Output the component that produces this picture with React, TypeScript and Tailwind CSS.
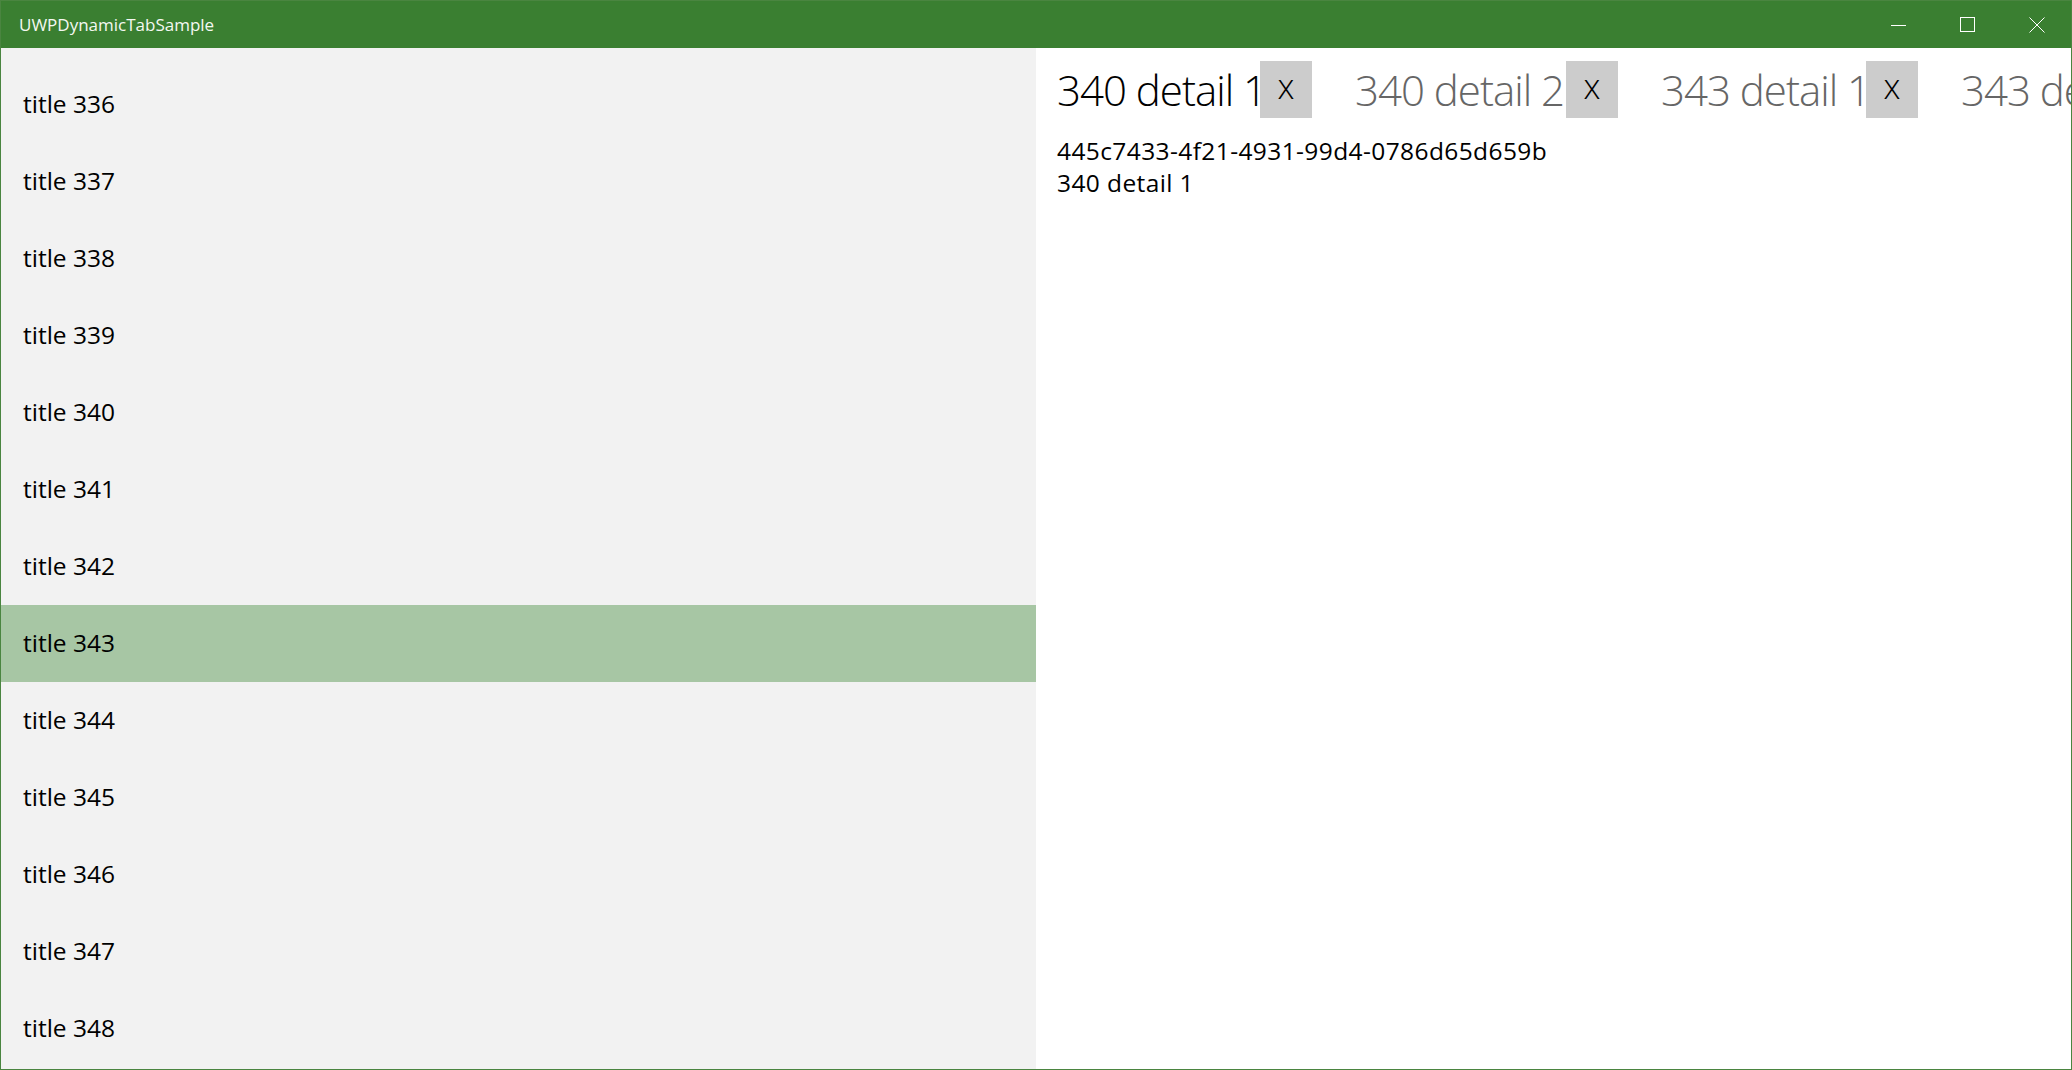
const FONT = "font-['Segoe_UI','Open_Sans',sans-serif]";

const titles = [336, 337, 338, 339, 340, 341, 342, 343, 344, 345, 346, 347, 348];

const tabs = [
  { label: "340 detail 1", width: "w-[203px]", active: true },
  { label: "340 detail 2", width: "w-[211px]", active: false },
  { label: "343 detail 1", width: "w-[205px]", active: false },
  { label: "343 detail 2", width: "w-[205px]", active: false },
];

function TitleBar() {
  return (
    <div className="flex h-[47px] shrink-0 items-center bg-[#3a7f31]">
      <span className="flex-1 pl-[18px] text-[17px] text-[#f4f8f2]">
        UWPDynamicTabSample
      </span>
      <div className="flex h-full">
        <div className="flex h-full w-[69px] items-center justify-center">
          <div className="mt-[1px] h-px w-[15px] bg-white" />
        </div>
        <div className="flex h-full w-[69px] items-center justify-center">
          <div className="h-[15px] w-[15px] border border-white" />
        </div>
        <div className="flex h-full w-[69px] items-center justify-center">
          <svg width="16" height="16" viewBox="0 0 16 16" fill="none">
            <path d="M0.5 0.5 L15.5 15.5 M15.5 0.5 L0.5 15.5" stroke="white" strokeWidth="1" />
          </svg>
        </div>
      </div>
    </div>
  );
}

function TitleList() {
  return (
    <div className="h-full w-[1035px] shrink-0 overflow-hidden bg-[#f2f2f2] pt-[18px]">
      {titles.map((t) => (
        <div
          key={t}
          className={
            "flex h-[77px] items-center pl-[22px] text-[24.5px] text-black " +
            (t === 343 ? "bg-[#a7c6a4]" : "")
          }
        >
          title {t}
        </div>
      ))}
    </div>
  );
}

function DetailPane() {
  return (
    <div className="h-full flex-1 overflow-hidden bg-white pl-[21px] pt-[13px]">
      <div className="flex h-[57px] items-center whitespace-nowrap">
        {tabs.map((tab) => (
          <div key={tab.label} className="mr-[43px] flex shrink-0 items-center">
            <span
              className={
                tab.width +
                " text-[42px] leading-none font-light tracking-[-1px] " +
                (tab.active ? "text-black" : "text-[#666666]")
              }
            >
              {tab.label}
            </span>
            <div className="flex h-[57px] w-[52px] items-center justify-center bg-[#cccccc] pb-[6px] text-[34px] font-light text-black">
              x
            </div>
          </div>
        ))}
      </div>
      <div className="mt-[17px] text-[24.5px] leading-[32px] tracking-[0.4px] text-black">
        <div>445c7433-4f21-4931-99d4-0786d65d659b</div>
        <div>340 detail 1</div>
      </div>
    </div>
  );
}

export default function App() {
  return (
    <div className={"flex h-[1070px] w-[2072px] flex-col overflow-hidden border border-[#4a8540] " + FONT}>
      <TitleBar />
      <div className="flex h-[1021px] shrink-0">
        <TitleList />
        <DetailPane />
      </div>
    </div>
  );
}
